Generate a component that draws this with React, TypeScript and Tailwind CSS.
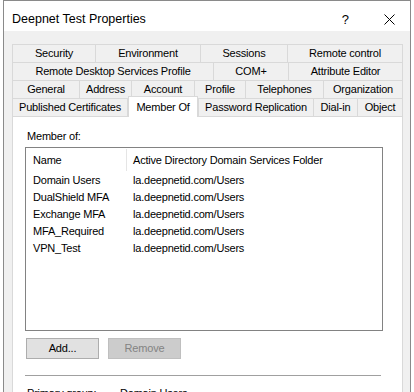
import React from "react";

const font = { fontFamily: '"Liberation Sans", Arial, sans-serif' };

type Tab = { label: string; w: number };

const rows: Tab[][] = [
  [
    { label: "Security", w: 83 },
    { label: "Environment", w: 105 },
    { label: "Sessions", w: 87 },
    { label: "Remote control", w: 116 },
  ],
  [
    { label: "Remote Desktop Services Profile", w: 201 },
    { label: "COM+", w: 75 },
    { label: "Attribute Editor", w: 115 },
  ],
  [
    { label: "General", w: 67 },
    { label: "Address", w: 52 },
    { label: "Account", w: 63 },
    { label: "Profile", w: 51 },
    { label: "Telephones", w: 78 },
    { label: "Organization", w: 80 },
  ],
];

const lastRow: Tab[] = [
  { label: "Published Certificates", w: 116 },
  { label: "Member Of", w: 70 },
  { label: "Password Replication", w: 115 },
  { label: "Dial-in", w: 44 },
  { label: "Object", w: 46 },
];

const groups = [
  "Domain Users",
  "DualShield MFA",
  "Exchange MFA",
  "MFA_Required",
  "VPN_Test",
];

function TabCell({ t, last }: { t: Tab; last: boolean }) {
  return (
    <div
      className={`h-[18px] box-border border-t border-l border-[#d9d9d9] bg-[#f0f0f0] flex items-center justify-center text-[11px] tracking-[-0.2px] text-black whitespace-nowrap ${last ? "border-r" : ""}`}
      style={{ width: t.w }}
    >
      {t.label}
    </div>
  );
}

export default function App() {
  return (
    <div className="w-[414px] h-[392px] bg-white overflow-hidden" style={font}>
      <div className="ml-[3px] w-[408px] h-[392px] border-l border-r border-t border-[#8a8a8a] box-border flex flex-col">
        {/* title bar */}
        <div className="h-[30px] bg-white flex items-center shrink-0">
          <div className="ml-[8px] mt-[7px] text-[12.5px] text-black">Deepnet Test Properties</div>
          <div className="ml-auto mt-[7px] text-[13px] text-black mr-[35px]">?</div>
          <svg width="11" height="11" viewBox="0 0 11 11" className="mr-[15px] mt-[7px]">
            <path d="M0.5 0.5 L10.5 10.5 M10.5 0.5 L0.5 10.5" stroke="#000" strokeWidth="1" />
          </svg>
        </div>
        {/* body */}
        <div className="flex-1 bg-[#f0f0f0] pl-[8px] pt-[13px] overflow-hidden">
          <div className="w-[391px] flex flex-col">
            {rows.map((r, i) => (
              <div key={i} className="flex">
                {r.map((t, j) => (
                  <TabCell key={t.label} t={t} last={j === r.length - 1} />
                ))}
              </div>
            ))}
            <div className="flex h-[18px] items-end">
              {lastRow.map((t, j) => {
                if (t.label === "Member Of") {
                  return (
                    <div
                      key={t.label}
                      className="relative z-10 h-[21px] -mb-[1px] box-border border-t border-l border-r border-[#d9d9d9] bg-white flex items-start justify-center pt-[2px] text-[11px] tracking-[-0.2px] text-black whitespace-nowrap"
                      style={{ width: t.w }}
                    >
                      {t.label}
                    </div>
                  );
                }
                return (
                  <div
                    key={t.label}
                    className={`h-[18px] box-border border-t border-l border-[#d9d9d9] bg-[#f0f0f0] flex items-center justify-center text-[11px] tracking-[-0.2px] text-black whitespace-nowrap ${j === lastRow.length - 1 || j === 0 ? "border-r" : ""}`}
                    style={{ width: t.w }}
                  >
                    {t.label}
                  </div>
                );
              })}
            </div>
            {/* panel */}
            <div className="h-[300px] bg-white border border-[#d9d9d9] box-border pl-[12px] pt-[12px] text-[11px] tracking-[-0.2px] text-black">
              <div className="h-[14px] leading-[14px] ml-[2px]">Member of:</div>
              <div className="mt-[4px] w-[358px] h-[184px] border border-[#828282] box-border bg-white">
                <div className="flex h-[24px] items-center">
                  <div className="w-[100px] pl-[7px]">Name</div>
                  <div className="w-px h-[22px] bg-[#e5e5e5]"></div>
                  <div className="pl-[6px]">Active Directory Domain Services Folder</div>
                </div>
                {groups.map((g) => (
                  <div key={g} className="flex h-[17px] items-center">
                    <div className="w-[101px] pl-[7px]">{g}</div>
                    <div className="pl-[6px]">la.deepnetid.com/Users</div>
                  </div>
                ))}
              </div>
              <div className="flex gap-[9px] mt-[7px] ml-[1px]">
                <div className="w-[73px] h-[21px] box-border border border-[#adadad] bg-[#e1e1e1] flex items-center justify-center">
                  Add...
                </div>
                <div className="w-[73px] h-[21px] box-border border border-[#bfbfbf] bg-[#cccccc] text-[#838383] flex items-center justify-center">
                  Remove
                </div>
              </div>
              <div className="mt-[16px] w-[356px] h-px bg-[#a0a0a0]"></div>
              <div className="flex mt-[10px] h-[14px] leading-[14px]">
                <div className="w-[93px] ml-[2px]">Primary group:</div>
                <div>Domain Users</div>
              </div>
            </div>
          </div>
        </div>
      </div>
    </div>
  );
}
